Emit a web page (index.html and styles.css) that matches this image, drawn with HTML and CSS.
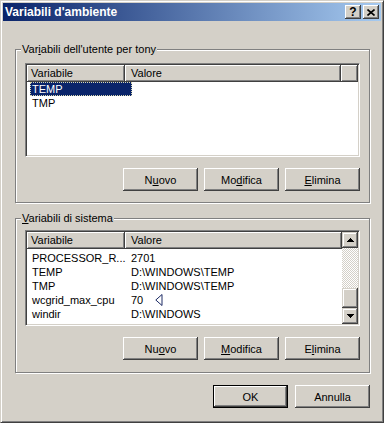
FILE: index.html
```html
<!DOCTYPE html>
<html lang="it">
<head>
    <meta charset="UTF-8">
    <title>Variabili d'ambiente</title>
    <link rel="stylesheet" href="styles.css">
</head>
<body>
<div class="window">
    <div class="titlebar">
        <span class="title">Variabili d'ambiente</span>
        <div class="caption-btns">
            <span class="cbtn help">?</span>
            <span class="cbtn">
                <svg width="8" height="7" viewBox="0 0 8 7"><path d="M0.5 0.5L7.5 6.5M7.5 0.5L0.5 6.5" stroke="#000" stroke-width="1.6"/></svg>
            </span>
        </div>
    </div>

    <!-- user variables -->
    <div class="group user">
        <div class="legend">Var<u>i</u>abili dell'utente per tony</div>
        <div class="listview">
            <div class="lv-main">
                <div class="lv-header">
                    <span class="hcell c1">Variabile</span>
                    <span class="hcell c2">Valore</span>
                    <span class="hcell filler"></span>
                </div>
                <div class="lv-rows">
                    <div class="row"><span class="c1"><span class="sel">TEMP</span></span><span class="c2"></span></div>
                    <div class="row"><span class="c1">TMP</span><span class="c2"></span></div>
                </div>
            </div>
        </div>
        <div class="btn-row">
            <button class="btn">N<u>u</u>ovo</button>
            <button class="btn">Mo<u>d</u>ifica</button>
            <button class="btn"><u>E</u>limina</button>
        </div>
    </div>

    <!-- system variables -->
    <div class="group system">
        <div class="legend"><u>V</u>ariabili di sistema</div>
        <div class="listview">
            <div class="lv-main">
                <div class="lv-header">
                    <span class="hcell c1">Variabile</span>
                    <span class="hcell c2 wide">Valore</span>
                </div>
                <div class="lv-rows">
                    <div class="row"><span class="c1">PROCESSOR_R...</span><span class="c2">2701</span></div>
                    <div class="row"><span class="c1">TEMP</span><span class="c2">D:\WINDOWS\TEMP</span></div>
                    <div class="row"><span class="c1">TMP</span><span class="c2">D:\WINDOWS\TEMP</span></div>
                    <div class="row"><span class="c1">wcgrid_max_cpu</span><span class="c2">70 <svg class="marker" width="8" height="12" viewBox="0 0 8 12"><path d="M7 0.5V11.5L0.8 6Z" fill="#fff" stroke="#1c2a64" stroke-width="1"/></svg></span></div>
                    <div class="row"><span class="c1">windir</span><span class="c2">D:\WINDOWS</span></div>
                </div>
            </div>
            <div class="scrollbar">
                <span class="sb-btn">
                    <svg width="7" height="4" viewBox="0 0 7 4"><path d="M3 0h1v1h1v1h1v1h1v1H0V3h1V2h1V1h1z"/></svg>
                </span>
                <span class="sb-track"></span>
                <span class="sb-btn thumb"></span>
                <span class="sb-btn">
                    <svg width="7" height="4" viewBox="0 0 7 4"><path d="M0 0h7v1H6v1H5v1H4v1H3V3H2V2H1V1H0z"/></svg>
                </span>
            </div>
        </div>
        <div class="btn-row">
            <button class="btn">Nu<u>o</u>vo</button>
            <button class="btn"><u>M</u>odifica</button>
            <button class="btn">E<u>l</u>imina</button>
        </div>
    </div>

    <div class="dialog-btns">
        <button class="btn default">OK</button>
        <button class="btn">Annulla</button>
    </div>
</div>
</body>
</html>
```

FILE: styles.css
```css
html, body {
    margin: 0;
    padding: 0;
    background-color: #D4D0C8;
}
body {
    font-family: "Liberation Sans", Arial, sans-serif;
    font-size: 11px;
    color: #000;
}
.window {
    width: 384px;
    height: 423px;
    box-sizing: border-box;
    border: 1px solid;
    border-color: #D4D0C8 #404040 #404040 #D4D0C8;
    box-shadow: inset 1px 1px #fff, inset -1px -1px #808080;
    padding: 2px;
    display: flex;
    flex-direction: column;
}
.titlebar {
    flex: none;
    height: 18px;
    display: flex;
    align-items: center;
    padding-left: 2px;
    background: linear-gradient(to right, #0A246A, #A6CAF0);
}
.title {
    flex: 1;
    color: #fff;
    font-weight: bold;
    font-size: 12px;
}
.caption-btns {
    display: flex;
    gap: 2px;
    margin-right: 2px;
}
.cbtn {
    width: 16px;
    height: 14px;
    box-sizing: border-box;
    background-color: #D4D0C8;
    box-shadow: inset -1px -1px #404040, inset 1px 1px #fff, inset -2px -2px #808080;
    display: flex;
    align-items: center;
    justify-content: center;
    font-weight: bold;
    font-size: 12px;
    line-height: 14px;
}

/* group boxes */
.group {
    border: 1px solid #808080;
    box-shadow: inset 1px 1px #fff, 1px 1px #fff;
    padding: 0 9px 11px;
}
.group.user {
    margin: 28px 11px 0 12px;
}
.group.system {
    margin: 15px 11px 0 12px;
    padding-bottom: 12px;
}
.legend {
    width: fit-content;
    height: 14px;
    line-height: 14px;
    margin: -8px 0 0 -4px;
    padding: 0 1px;
    background-color: #D4D0C8;
}

/* list views */
.listview {
    margin-top: 7px;
    height: 94px;
    box-sizing: border-box;
    background-color: #fff;
    border: 1px solid;
    border-color: #808080 #fff #fff #808080;
    box-shadow: inset 1px 1px #404040, inset -1px -1px #D4D0C8;
    padding: 1px;
    display: flex;
}
.system .listview {
    margin-top: 5px;
    height: 96px;
}
.lv-main {
    flex: 1;
    min-width: 0;
    display: flex;
    flex-direction: column;
}
.lv-header {
    flex: none;
    height: 17px;
    display: flex;
    background-color: #D4D0C8;
}
.hcell {
    box-sizing: border-box;
    height: 17px;
    line-height: 16px;
    box-shadow: inset -1px -1px #404040, inset 1px 1px #fff, inset -2px -2px #808080;
}
.c1 {
    flex: none;
    width: 98px;
    padding-left: 4px;
    box-sizing: border-box;
    white-space: nowrap;
}
.c2 {
    flex: none;
    width: 216px;
    padding-left: 6px;
    box-sizing: border-box;
    white-space: nowrap;
}
.c2.wide {
    width: 217px;
}
.filler {
    flex: 1;
}
.lv-rows {
    flex: 1;
}
.system .lv-rows {
    padding-top: 2px;
}
.row {
    display: flex;
    height: 14px;
    line-height: 14px;
}
.row .c1 {
    padding-left: 5px;
}
.row .c2 {
    display: flex;
    align-items: center;
}
.sel {
    display: block;
    width: 102px;
    height: 14px;
    box-sizing: border-box;
    margin-left: -2px;
    padding-left: 1px;
    line-height: 12px;
    background-color: #0A246A;
    color: #fff;
    border: 1px dotted #d8d8b0;
}
.marker {
    margin-left: 12px;
}

/* scrollbar */
.scrollbar {
    flex: none;
    width: 16px;
    display: flex;
    flex-direction: column;
}
.sb-btn {
    flex: none;
    height: 16px;
    background-color: #D4D0C8;
    box-shadow: inset -1px -1px #404040, inset 1px 1px #D4D0C8, inset -2px -2px #808080, inset 2px 2px #fff;
    display: flex;
    align-items: center;
    justify-content: center;
}
.sb-btn.thumb {
    height: 20px;
}
.sb-track {
    flex: 1;
    background: repeating-conic-gradient(#fff 0 25%, #D4D0C8 0 50%) 0 0 / 2px 2px;
}

/* buttons */
.btn-row {
    display: flex;
    justify-content: flex-end;
    gap: 6px;
    margin-top: 11px;
}
.btn {
    width: 75px;
    height: 23px;
    box-sizing: border-box;
    padding: 0;
    border: none;
    font: inherit;
    color: #000;
    background-color: #D4D0C8;
    box-shadow: inset -1px -1px #404040, inset 1px 1px #fff, inset -2px -2px #808080;
}
.btn.default {
    border: 1px solid #000;
}
.dialog-btns {
    display: flex;
    justify-content: flex-end;
    gap: 7px;
    margin: 12px 11px 0 0;
}
```
